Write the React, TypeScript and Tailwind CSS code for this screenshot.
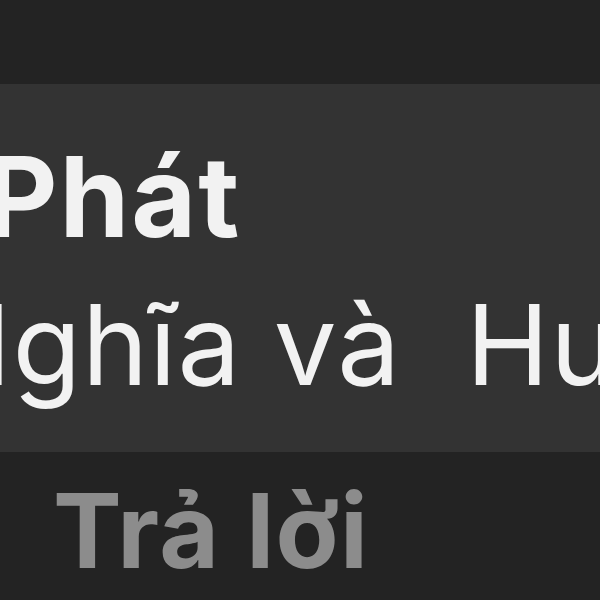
export default function App() {
  return (
    <div
      className="w-[600px] h-[600px] bg-[#232323] overflow-hidden flex flex-col"
      style={{ fontFamily: "Inter, 'Noto Sans', sans-serif" }}
    >
      {/* top strip */}
      <div className="h-[84px] shrink-0" />

      {/* comment bubble */}
      <div className="h-[368px] shrink-0 bg-[#333333] pt-[56px] flex flex-col gap-[36px] overflow-hidden">
        <div className="ml-[-15px] text-[112px] leading-none font-bold text-[#f2f2f2] whitespace-nowrap tracking-[2px]">
          Phát
        </div>
        <div className="ml-[-73px] text-[112px] leading-none text-[#f2f2f2] whitespace-pre tracking-[1px]">
          {"Nghĩa và  Huy"}
        </div>
      </div>

      {/* actions */}
      <div className="pt-[27px] pl-[53px]">
        <span className="text-[103px] leading-none font-bold text-[#8c8c8c] whitespace-nowrap tracking-[1.4px]">
          Trả lời
        </span>
      </div>
    </div>
  )
}
